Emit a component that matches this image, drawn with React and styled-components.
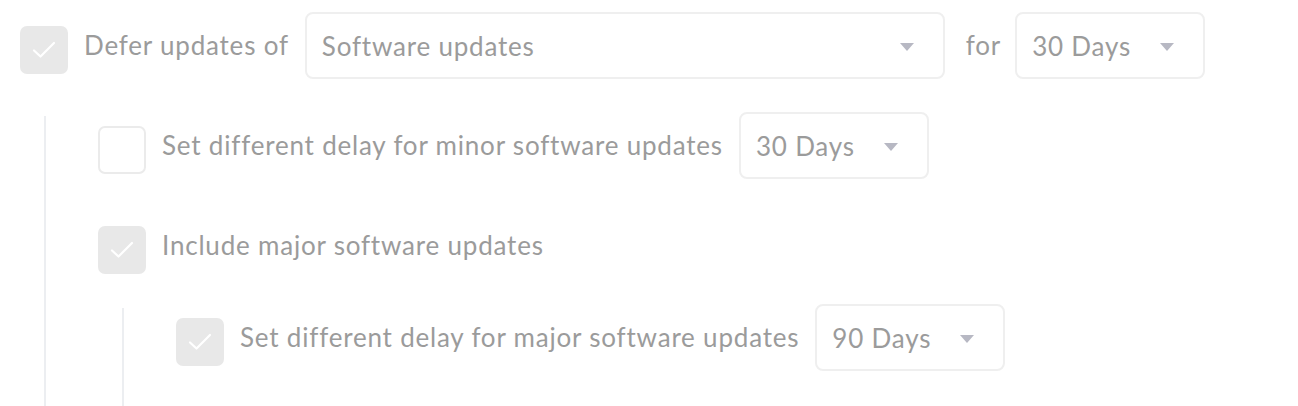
import React from "react";
import styled, { createGlobalStyle } from "styled-components";

const GlobalStyle = createGlobalStyle`
  html, body {
    margin: 0;
    padding: 0;
    background: #ffffff;
  }
  body {
    font-family: Lato, "Open Sans", sans-serif;
  }
`;

const Page = styled.div`
  box-sizing: border-box;
  min-height: 100vh;
  padding: 12px 20px 0;
  display: flex;
  flex-direction: column;
  gap: 33px;
`;

const Row = styled.div`
  display: flex;
  align-items: flex-start;
  min-height: 67px;
`;

const Box = styled.div`
  box-sizing: border-box;
  width: 48px;
  height: 48px;
  margin-top: 14px;
  border-radius: 7px;
  flex-shrink: 0;
  display: flex;
  align-items: center;
  justify-content: center;
  background: ${(p) => (p.$checked ? "#e8e8e8" : "#ffffff")};
  border: 2px solid ${(p) => (p.$checked ? "#e8e8e8" : "#ebebeb")};
`;

const Text = styled.span`
  line-height: 67px;
  font-size: 26px;
  letter-spacing: 0.8px;
  color: #9b9b9b;
  white-space: nowrap;
`;

const Label = styled(Text)`
  margin-left: 16px;
`;

const Word = styled(Text)`
  margin: 0 14px 0 21px;
`;

const Select = styled.div`
  box-sizing: border-box;
  width: ${(p) => p.$width}px;
  height: 67px;
  margin-left: ${(p) => p.$gap ?? 16}px;
  padding: 0 29px 0 15px;
  border: 2px solid #efefef;
  border-radius: 8px;
  display: flex;
  align-items: center;
  justify-content: space-between;
  font-size: 26px;
  letter-spacing: 0.8px;
  color: #9b9b9b;
  flex-shrink: 0;
`;

const Caret = styled.span`
  width: 0;
  height: 0;
  border-left: 7px solid transparent;
  border-right: 7px solid transparent;
  border-top: 8px solid #b7b8c3;
  margin-top: 2px;
`;

const Group = styled.div`
  position: relative;
  flex: 1;
  margin-left: 24px;
  margin-top: ${(p) => p.$top ?? 0}px;
  padding-left: 54px;
  display: flex;
  flex-direction: column;
  gap: 33px;

  &::before {
    content: "";
    position: absolute;
    left: 0;
    top: 4px;
    bottom: 0;
    width: 2px;
    background: #eceef1;
  }
`;

function Check({ checked }) {
  return (
    <Box $checked={checked}>
      {checked && (
        <svg width="24" height="18" viewBox="0 0 24 18" fill="none">
          <path
            d="M2 9.5 L8.5 15.5 L22 2"
            stroke="#ffffff"
            strokeWidth="2.2"
            strokeLinecap="round"
            strokeLinejoin="round"
          />
        </svg>
      )}
    </Box>
  );
}

function Dropdown({ value, width, gap }) {
  return (
    <Select $width={width} $gap={gap}>
      <span>{value}</span>
      <Caret />
    </Select>
  );
}

export default function App() {
  return (
    <>
      <GlobalStyle />
      <Page>
        <Row>
          <Check checked />
          <Label>Defer updates of</Label>
          <Dropdown value="Software updates" width={640} />
          <Word>for</Word>
          <Dropdown value="30 Days" width={190} gap={0} />
        </Row>
        <Group>
          <Row>
            <Check />
            <Label>Set different delay for minor software updates</Label>
            <Dropdown value="30 Days" width={190} />
          </Row>
          <Row>
            <Check checked />
            <Label>Include major software updates</Label>
          </Row>
          <Group $top={-8}>
            <Row>
              <Check checked />
              <Label>Set different delay for major software updates</Label>
              <Dropdown value="90 Days" width={190} />
            </Row>
          </Group>
        </Group>
      </Page>
    </>
  );
}
